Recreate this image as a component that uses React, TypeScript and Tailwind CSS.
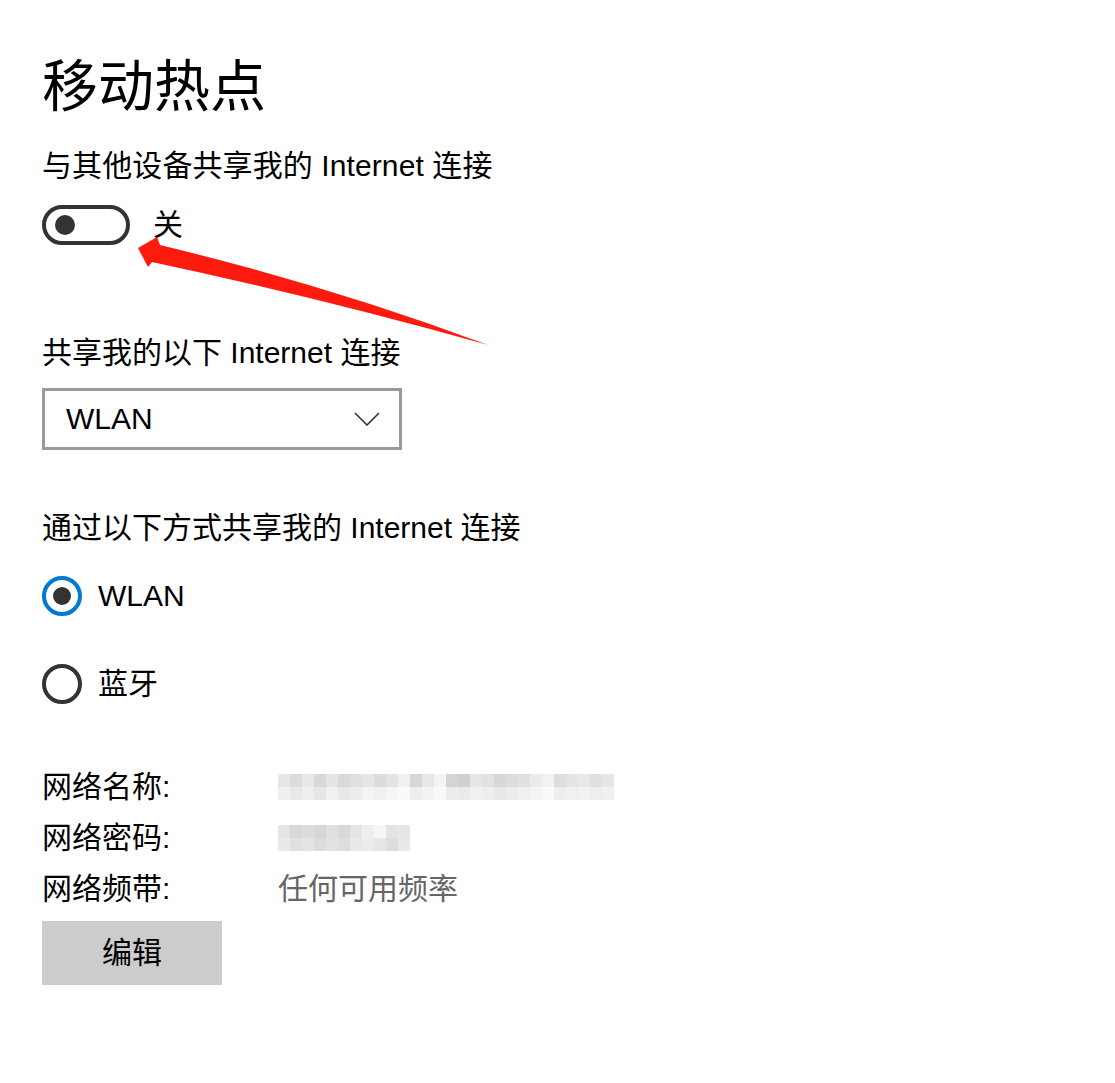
import React from "react";

const font = { fontFamily: '"Liberation Sans", "Noto Sans CJK SC", sans-serif' };

function Blur({ cells, h }: { cells: string[]; h: number }) {
  return (
    <div className="flex">
      {cells.map((c, i) => (
        <div key={i} className="w-[12px]" style={{ height: h, background: c }} />
      ))}
    </div>
  );
}

export default function App() {
  const row1a = ["#e6e6e6","#dcdcdc","#e8e8e8","#d8d8d8","#e4e4e4","#dadada","#e0e0e0","#e6e6e6","#dcdcdc","#e4e4e4","#f0f0f0","#d6d6d6","#e8e8e8","#f4f4f4","#d4d4d4","#d0d0d0","#e6e6e6","#e2e2e2","#d8d8d8","#dcdcdc","#e0e0e0","#ebebeb","#f2f2f2","#dedede","#e4e4e4","#e8e8e8","#e0e0e0","#e6e6e6"];
  const row1b = ["#efefef","#e8e8e8","#eeeeee","#e6e6e6","#f0f0f0","#e8e8e8","#ececec","#f4f4f4","#f0f0f0","#f6f6f6","#fafafa","#eeeeee","#f2f2f2","#f8f8f8","#ececec","#eaeaea","#f0f0f0","#eeeeee","#e8e8e8","#ececec","#f0f0f0","#f4f4f4","#fafafa","#eeeeee","#f0f0f0","#f2f2f2","#eeeeee","#f0f0f0"];
  const row2a = ["#e4e4e4","#d8d8d8","#dcdcdc","#d6d6d6","#e0e0e0","#d8d8d8","#e4e4e4","#eeeeee","#f6f6f6","#e4e4e4","#e6e6e6"];
  const row2b = ["#e8e8e8","#e0e0e0","#e4e4e4","#dcdcdc","#e2e2e2","#dedede","#e8e8e8","#ececec","#e6e6e6","#dedede","#e8e8e8"];
  return (
    <div className="relative w-[1115px] h-[1083px] bg-white text-black pl-[42px]" style={font}>
      <div className="pt-[56px] text-[56px] leading-[62px]">移动热点</div>
      <div className="mt-[31px] text-[30px] leading-[34px] tracking-[0.1px]">与其他设备共享我的 Internet 连接</div>
      <div className="mt-[22px] flex items-center h-[40px]">
        <div className="w-[88px] h-[40px] rounded-full border-[4px] border-[#333] flex items-center pl-[9px]">
          <div className="w-[20px] h-[20px] rounded-full bg-[#333]" />
        </div>
        <span className="ml-[23px] text-[30px] leading-[34px]">关</span>
      </div>
      <div className="mt-[91px] text-[30px] leading-[34px]">共享我的以下 Internet 连接</div>
      <div className="mt-[18px] w-[360px] h-[62px] border-[3px] border-[#999] flex items-center justify-between pl-[21px] pr-[19px]">
        <span className="text-[30px] leading-[34px]">WLAN</span>
        <svg width="26" height="14" viewBox="0 0 26 14">
          <path d="M1 1 L13 13 L25 1" fill="none" stroke="#333" strokeWidth="1.6" />
        </svg>
      </div>
      <div className="mt-[61px] text-[30px] leading-[34px]">通过以下方式共享我的 Internet 连接</div>
      <div className="mt-[31px] flex items-center h-[40px]">
        <div className="w-[40px] h-[40px] rounded-full border-[4px] border-[#0078d7] flex items-center justify-center">
          <div className="w-[18px] h-[18px] rounded-full bg-[#333]" />
        </div>
        <span className="ml-[16px] text-[30px] leading-[34px]">WLAN</span>
      </div>
      <div className="mt-[48px] flex items-center h-[40px]">
        <div className="w-[40px] h-[40px] rounded-full border-[4px] border-[#333]" />
        <span className="ml-[16px] text-[30px] leading-[34px]">蓝牙</span>
      </div>
      <div className="mt-[66px] flex flex-col gap-[17px]">
        <div className="flex items-center h-[34px]">
          <span className="w-[236px] text-[30px] leading-[34px]">网络名称:</span>
          <div className="flex flex-col">
            <Blur cells={row1a} h={13} />
            <Blur cells={row1b} h={13} />
          </div>
        </div>
        <div className="flex items-center h-[34px]">
          <span className="w-[236px] text-[30px] leading-[34px]">网络密码:</span>
          <div className="flex flex-col">
            <Blur cells={row2a} h={13} />
            <Blur cells={row2b} h={13} />
          </div>
        </div>
        <div className="flex items-center h-[34px]">
          <span className="w-[236px] text-[30px] leading-[34px]">网络频带:</span>
          <span className="text-[30px] leading-[34px] text-[#666]">任何可用频率</span>
        </div>
      </div>
      <div className="mt-[15px] w-[180px] h-[64px] bg-[#ccc] flex items-center justify-center text-[30px] leading-[34px]">
        编辑
      </div>
      <svg className="absolute left-0 top-0 pointer-events-none" width="1115" height="1083">
        <path d="M138,248 L157,237 L160,245 Q330,286 488,345 Q320,298 152,262 L148,267 Z" fill="#ff1a10" />
      </svg>
    </div>
  );
}
